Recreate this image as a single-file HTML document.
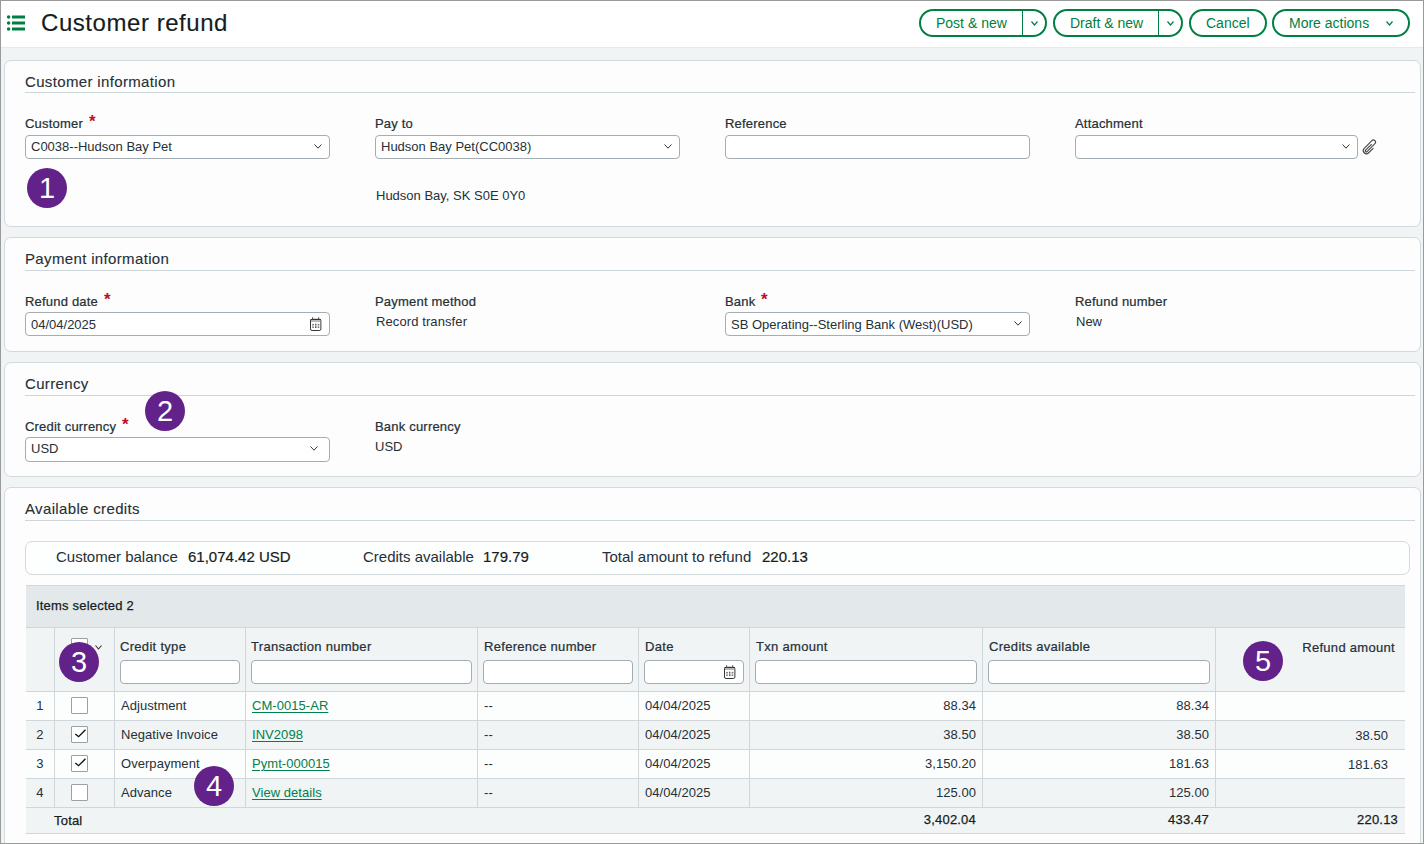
<!DOCTYPE html>
<html><head><meta charset="utf-8"><style>
*{box-sizing:border-box;margin:0;padding:0}
html,body{width:1424px;height:844px;overflow:hidden}
body{position:relative;background:#f1f4f5;font-family:"Liberation Sans",sans-serif;color:#253037}
.abs{position:absolute}
#frame{position:absolute;left:0;top:0;width:1424px;height:844px;border:1px solid #9a9a9a;border-right-width:1px;border-bottom-width:1px;z-index:50;pointer-events:none}
#hdr{position:absolute;left:0;top:0;width:1424px;height:48px;background:#fff;border-bottom:1px solid #e4e9eb}
.title{position:absolute;left:41px;top:9px;font-size:24px;line-height:28px;color:#161c20;letter-spacing:0.55px;-webkit-text-stroke:0.15px #161c20}
.btn{position:absolute;top:9px;height:28px;border:2px solid #007f43;border-radius:14px;color:#007f43;font-size:14px;line-height:24px;background:#fff;white-space:nowrap;letter-spacing:0}
.btn .dv{position:absolute;top:0;bottom:0;width:1px;background:#007f43}
.card{position:absolute;left:4px;width:1417px;background:#fdfdfd;border:1px solid #d2dadd;border-radius:7px}
.stitle{position:absolute;left:20px;font-size:15px;line-height:18px;color:#253037;letter-spacing:0.35px;-webkit-text-stroke:0.12px #253037}
.sline{position:absolute;left:20px;right:5px;height:1px;background:#cdd6da}
.lbl{position:absolute;font-size:13px;line-height:16px;color:#253037;letter-spacing:0.2px;-webkit-text-stroke:0.22px #253037;white-space:nowrap}
.req{position:absolute;color:#c00d2a;font-size:17px;font-weight:bold;-webkit-text-stroke:0;top:-2px}
.inp{position:absolute;height:24px;background:#fff;border:1px solid #a3adb3;border-radius:4px;font-size:13px;line-height:23px;padding-left:5px;color:#253037;white-space:nowrap;letter-spacing:0}
.val{position:absolute;font-size:13px;line-height:16px;color:#253037;letter-spacing:0;white-space:nowrap}
.circ{position:absolute;width:40px;height:40px;border-radius:50%;background:#632289;color:#fff;font-size:29px;line-height:40px;text-align:center;z-index:10}
.sum{position:absolute;top:548px;font-size:15px;line-height:18px;color:#253037;letter-spacing:0}
.sumb{position:absolute;top:548px;font-size:15px;line-height:18px;color:#161c20;-webkit-text-stroke:0.2px #161c20;letter-spacing:0}
.gt{position:absolute;font-size:13px;line-height:16px;color:#161c20;-webkit-text-stroke:0.25px #161c20;letter-spacing:0.2px;white-space:nowrap}
.gh{position:absolute;font-size:13px;line-height:16px;color:#253037;-webkit-text-stroke:0.22px #253037;letter-spacing:0.3px;white-space:nowrap}
.gc{position:absolute;font-size:13px;line-height:16px;color:#253037;white-space:nowrap;letter-spacing:0.05px}
.lnk{color:#00804a;text-decoration:underline;text-underline-offset:2px}
.fin{position:absolute;top:660px;height:24px;background:#fff;border:1px solid #a3adb3;border-radius:4px}
.cb{position:absolute;width:17px;height:17px;border:1px solid #97a2a8;background:#fff;border-radius:1px}
</style></head><body>
<div id="hdr">
<svg class="abs" style="left:6px;top:14px" width="20" height="18" viewBox="0 0 20 18"><g fill="#007f43"><circle cx="2.6" cy="3" r="1.75"/><circle cx="2.6" cy="9" r="1.75"/><circle cx="2.6" cy="15" r="1.75"/><rect x="6" y="1.5" width="13" height="3"/><rect x="6" y="7.5" width="13" height="3"/><rect x="6" y="13.5" width="13" height="3"/></g></svg>
<div class="title">Customer refund</div>
<div class="btn" style="left:919px;width:128px"><span class="abs" style="left:15px;top:0">Post &amp; new</span><div class="dv" style="left:101px"></div><svg class="abs" style="left:110px;top:10px;overflow:visible" width="7" height="4" viewBox="0 0 7 4"><path d="M0.5 0.5 L3.5 4 L6.5 0.5" fill="none" stroke="#007f43" stroke-width="1.2"/></svg></div>
<div class="btn" style="left:1053px;width:130px"><span class="abs" style="left:15px;top:0">Draft &amp; new</span><div class="dv" style="left:103px"></div><svg class="abs" style="left:112px;top:10px;overflow:visible" width="7" height="4" viewBox="0 0 7 4"><path d="M0.5 0.5 L3.5 4 L6.5 0.5" fill="none" stroke="#007f43" stroke-width="1.2"/></svg></div>
<div class="btn" style="left:1189px;width:78px"><span class="abs" style="left:15px;top:0">Cancel</span></div>
<div class="btn" style="left:1272px;width:138px"><span class="abs" style="left:15px;top:0">More actions</span><svg class="abs" style="left:112px;top:10px;overflow:visible" width="7" height="4" viewBox="0 0 7 4"><path d="M0.5 0.5 L3.5 4 L6.5 0.5" fill="none" stroke="#007f43" stroke-width="1.2"/></svg></div>
</div>
<div class="card" style="top:60px;height:167px"><div class="stitle" style="top:12px">Customer information</div><div class="sline" style="top:31px"></div></div>
<div class="lbl" style="left:25px;top:116px">Customer<span class="req" style="left:64px">*</span></div>
<div class="inp" style="left:25px;top:135px;width:305px;height:24px;line-height:22px">C0038--Hudson Bay Pet<svg class="abs" style="left:288px;top:8px;overflow:visible" width="8" height="4.2" viewBox="0 0 8 4.2"><path d="M0.5 0.5 L4.0 4.2 L7.5 0.5" fill="none" stroke="#333" stroke-width="1.0"/></svg></div>
<div class="lbl" style="left:375px;top:116px">Pay to</div>
<div class="inp" style="left:375px;top:135px;width:305px;height:24px;line-height:22px">Hudson Bay Pet(CC0038)<svg class="abs" style="left:288px;top:8px;overflow:visible" width="8" height="4.2" viewBox="0 0 8 4.2"><path d="M0.5 0.5 L4.0 4.2 L7.5 0.5" fill="none" stroke="#333" stroke-width="1.0"/></svg></div>
<div class="val" style="left:376px;top:188px">Hudson Bay, SK S0E 0Y0</div>
<div class="lbl" style="left:725px;top:116px">Reference</div>
<div class="inp" style="left:725px;top:135px;width:305px;height:24px;line-height:23px"></div>
<div class="lbl" style="left:1075px;top:116px">Attachment</div>
<div class="inp" style="left:1075px;top:135px;width:283px;height:24px;line-height:23px"><svg class="abs" style="left:266px;top:8px;overflow:visible" width="8" height="4.2" viewBox="0 0 8 4.2"><path d="M0.5 0.5 L4.0 4.2 L7.5 0.5" fill="none" stroke="#333" stroke-width="1.0"/></svg></div>
<svg class="abs" style="left:1360px;top:137px" width="20" height="20" viewBox="0 0 20 20"><g transform="translate(10 10) rotate(45) translate(-3.15 -9.2)"><path d="M2.3 6 V14.6 A1 1 0 0 0 4.3 14.6 V3.4 A2.15 2.15 0 0 0 0 3.4 V14.2 A3.15 3.15 0 0 0 6.3 14.2 V7.5" fill="none" stroke="#444" stroke-width="1.1"/></g></svg>
<div class="circ" style="left:27px;top:168px">1</div>
<div class="card" style="top:237px;height:115px"><div class="stitle" style="top:12px">Payment information</div><div class="sline" style="top:32px"></div></div>
<div class="lbl" style="left:25px;top:294px">Refund date<span class="req" style="left:79px">*</span></div>
<div class="inp" style="left:25px;top:312px;width:305px;height:24px;line-height:23px">04/04/2025<svg class="abs" style="left:284px;top:4px" width="12" height="14" viewBox="0 0 12 14"><rect x="0.5" y="2.3" width="10.4" height="11.2" rx="1.6" fill="none" stroke="#333" stroke-width="1"/><rect x="0.5" y="2" width="10.4" height="1.3" fill="#333"/><rect x="1" y="3.3" width="9.4" height="1.7" fill="#b5b5b5"/><rect x="2.1" y="0.2" width="1" height="2.2" fill="#555"/><rect x="8.2" y="0.2" width="1" height="2.2" fill="#555"/><g fill="#777"><rect x="2.2" y="6.9" width="1.7" height="1.6"/><rect x="7.6" y="6.9" width="1.7" height="1.6"/></g><g fill="#333"><rect x="5.2" y="6.7" width="1.1" height="1.9"/><rect x="2.2" y="9.6" width="1.7" height="1"/><rect x="7.6" y="9.6" width="1.7" height="1"/><rect x="5" y="9.4" width="1.5" height="1.4"/></g></svg></div>
<div class="lbl" style="left:375px;top:294px">Payment method</div>
<div class="val" style="left:376px;top:314px;letter-spacing:0.1px">Record transfer</div>
<div class="lbl" style="left:725px;top:294px">Bank<span class="req" style="left:36px">*</span></div>
<div class="inp" style="left:725px;top:312px;width:305px;height:24px;line-height:23px">SB Operating--Sterling Bank (West)(USD)<svg class="abs" style="left:288px;top:8px;overflow:visible" width="8" height="4.2" viewBox="0 0 8 4.2"><path d="M0.5 0.5 L4.0 4.2 L7.5 0.5" fill="none" stroke="#333" stroke-width="1.0"/></svg></div>
<div class="lbl" style="left:1075px;top:294px">Refund number</div>
<div class="val" style="left:1076px;top:314px">New</div>
<div class="card" style="top:362px;height:115px"><div class="stitle" style="top:12px">Currency</div><div class="sline" style="top:32px"></div></div>
<div class="lbl" style="left:25px;top:419px">Credit currency<span class="req" style="left:97px">*</span></div>
<div class="inp" style="left:25px;top:437px;width:305px;height:25px;line-height:22px">USD<svg class="abs" style="left:284px;top:8px;overflow:visible" width="8" height="4.2" viewBox="0 0 8 4.2"><path d="M0.5 0.5 L4.0 4.2 L7.5 0.5" fill="none" stroke="#333" stroke-width="1.0"/></svg></div>
<div class="lbl" style="left:375px;top:419px">Bank currency</div>
<div class="val" style="left:375px;top:439px">USD</div>
<div class="circ" style="left:145px;top:391px">2</div>
<div class="card" style="top:487px;height:400px"><div class="stitle" style="top:12px">Available credits</div><div class="sline" style="top:32px"></div></div>
<div class="abs" style="left:25px;top:541px;width:1385px;height:34px;background:#fdfefe;border:1px solid #d2dadd;border-radius:7px"></div>
<div class="sum" style="left:56px">Customer balance</div><div class="sumb" style="left:188px">61,074.42 USD</div>
<div class="sum" style="left:363px">Credits available</div><div class="sumb" style="left:483px">179.79</div>
<div class="sum" style="left:602px">Total amount to refund</div><div class="sumb" style="left:762px">220.13</div>
<div class="abs" style="left:26px;top:585px;width:1379px;height:43px;background:#e3e9eb;border-top:1px solid #cfd7db;border-bottom:1px solid #cfd7db"></div>
<div class="gt" style="left:36px;top:598px">Items selected 2</div>
<div class="abs" style="left:26px;top:628px;width:1379px;height:64px;background:#f1f4f5;border-bottom:1px solid #cfd7db"></div>
<div class="abs" style="left:26px;top:692px;width:1379px;height:29px;background:#fcfdfd"></div>
<div class="abs" style="left:26px;top:721px;width:1379px;height:29px;background:#f1f4f5"></div>
<div class="abs" style="left:26px;top:750px;width:1379px;height:29px;background:#fcfdfd"></div>
<div class="abs" style="left:26px;top:779px;width:1379px;height:29px;background:#f1f4f5"></div>
<div class="abs" style="left:26px;top:808px;width:1379px;height:26px;background:#f1f4f5;border-bottom:1px solid #cfd7db"></div>
<div class="abs" style="left:26px;top:720px;width:1379px;height:1px;background:#cfd7db"></div>
<div class="abs" style="left:26px;top:749px;width:1379px;height:1px;background:#cfd7db"></div>
<div class="abs" style="left:26px;top:778px;width:1379px;height:1px;background:#cfd7db"></div>
<div class="abs" style="left:26px;top:807px;width:1379px;height:1px;background:#cfd7db"></div>
<div class="abs" style="left:54px;top:628px;width:1px;height:179px;background:#cfd7db"></div>
<div class="abs" style="left:114px;top:628px;width:1px;height:179px;background:#cfd7db"></div>
<div class="abs" style="left:245px;top:628px;width:1px;height:179px;background:#cfd7db"></div>
<div class="abs" style="left:477px;top:628px;width:1px;height:179px;background:#cfd7db"></div>
<div class="abs" style="left:638px;top:628px;width:1px;height:179px;background:#cfd7db"></div>
<div class="abs" style="left:749px;top:628px;width:1px;height:179px;background:#cfd7db"></div>
<div class="abs" style="left:982px;top:628px;width:1px;height:179px;background:#cfd7db"></div>
<div class="abs" style="left:1215px;top:628px;width:1px;height:179px;background:#cfd7db"></div>
<div class="gh" style="left:120px;top:639px">Credit type</div>
<div class="gh" style="left:251px;top:639px">Transaction number</div>
<div class="gh" style="left:484px;top:639px">Reference number</div>
<div class="gh" style="left:645px;top:639px">Date</div>
<div class="gh" style="left:756px;top:639px">Txn amount</div>
<div class="gh" style="left:989px;top:639px">Credits available</div>
<div class="gh" style="left:1215px;width:180px;text-align:right;top:640px">Refund amount</div>
<div class="fin" style="left:120px;width:120px"></div>
<div class="fin" style="left:251px;width:221px"></div>
<div class="fin" style="left:483px;width:150px"></div>
<div class="fin" style="left:644px;width:100px"></div>
<div class="fin" style="left:755px;width:222px"></div>
<div class="fin" style="left:988px;width:222px"></div>
<svg class="abs" style="left:724px;top:665px" width="12" height="14" viewBox="0 0 12 14"><rect x="0.5" y="2.3" width="10.4" height="11.2" rx="1.6" fill="none" stroke="#333" stroke-width="1"/><rect x="0.5" y="2" width="10.4" height="1.3" fill="#333"/><rect x="1" y="3.3" width="9.4" height="1.7" fill="#b5b5b5"/><rect x="2.1" y="0.2" width="1" height="2.2" fill="#555"/><rect x="8.2" y="0.2" width="1" height="2.2" fill="#555"/><g fill="#777"><rect x="2.2" y="6.9" width="1.7" height="1.6"/><rect x="7.6" y="6.9" width="1.7" height="1.6"/></g><g fill="#333"><rect x="5.2" y="6.7" width="1.1" height="1.9"/><rect x="2.2" y="9.6" width="1.7" height="1"/><rect x="7.6" y="9.6" width="1.7" height="1"/><rect x="5" y="9.4" width="1.5" height="1.4"/></g></svg>
<div class="cb" style="left:71px;top:638px"></div><svg class="abs" style="left:95px;top:645px;overflow:visible" width="7" height="4" viewBox="0 0 7 4"><path d="M0.5 0.5 L3.5 4 L6.5 0.5" fill="none" stroke="#333" stroke-width="1.1"/></svg>
<div class="gc" style="left:26px;width:28px;text-align:center;top:698px">1</div>
<div class="cb" style="left:71px;top:697px"></div>
<div class="gc" style="left:121px;top:698px">Adjustment</div>
<div class="gc lnk" style="left:252px;top:698px">CM-0015-AR</div>
<div class="gc" style="left:484px;top:698px">--</div>
<div class="gc" style="left:645px;top:698px">04/04/2025</div>
<div class="gc" style="left:749px;width:227px;text-align:right;top:698px">88.34</div>
<div class="gc" style="left:982px;width:227px;text-align:right;top:698px">88.34</div>
<div class="gc" style="left:26px;width:28px;text-align:center;top:727px">2</div>
<div class="cb" style="left:71px;top:726px"><svg width="15" height="15" viewBox="0 0 15 15" style="position:absolute;left:0;top:0"><path d="M3.3 6.9 L6.6 9.7 L13.5 2.7" fill="none" stroke="#111" stroke-width="1.35"/></svg></div>
<div class="gc" style="left:121px;top:727px">Negative Invoice</div>
<div class="gc lnk" style="left:252px;top:727px">INV2098</div>
<div class="gc" style="left:484px;top:727px">--</div>
<div class="gc" style="left:645px;top:727px">04/04/2025</div>
<div class="gc" style="left:749px;width:227px;text-align:right;top:727px">38.50</div>
<div class="gc" style="left:982px;width:227px;text-align:right;top:727px">38.50</div>
<div class="gc" style="left:1215px;width:173px;text-align:right;top:728px">38.50</div>
<div class="gc" style="left:26px;width:28px;text-align:center;top:756px">3</div>
<div class="cb" style="left:71px;top:755px"><svg width="15" height="15" viewBox="0 0 15 15" style="position:absolute;left:0;top:0"><path d="M3.3 6.9 L6.6 9.7 L13.5 2.7" fill="none" stroke="#111" stroke-width="1.35"/></svg></div>
<div class="gc" style="left:121px;top:756px">Overpayment</div>
<div class="gc lnk" style="left:252px;top:756px">Pymt-000015</div>
<div class="gc" style="left:484px;top:756px">--</div>
<div class="gc" style="left:645px;top:756px">04/04/2025</div>
<div class="gc" style="left:749px;width:227px;text-align:right;top:756px">3,150.20</div>
<div class="gc" style="left:982px;width:227px;text-align:right;top:756px">181.63</div>
<div class="gc" style="left:1215px;width:173px;text-align:right;top:757px">181.63</div>
<div class="gc" style="left:26px;width:28px;text-align:center;top:785px">4</div>
<div class="cb" style="left:71px;top:784px"></div>
<div class="gc" style="left:121px;top:785px">Advance</div>
<div class="gc lnk" style="left:252px;top:785px">View details</div>
<div class="gc" style="left:484px;top:785px">--</div>
<div class="gc" style="left:645px;top:785px">04/04/2025</div>
<div class="gc" style="left:749px;width:227px;text-align:right;top:785px">125.00</div>
<div class="gc" style="left:982px;width:227px;text-align:right;top:785px">125.00</div>
<div class="gt" style="left:54px;top:813px">Total</div>
<div class="gt" style="left:749px;width:227px;text-align:right;top:812px">3,402.04</div>
<div class="gt" style="left:982px;width:227px;text-align:right;top:812px">433.47</div>
<div class="gt" style="left:1215px;width:183px;text-align:right;top:812px">220.13</div>
<div class="circ" style="left:59px;top:642px">3</div>
<div class="circ" style="left:194px;top:766px">4</div>
<div class="circ" style="left:1243px;top:641px">5</div>
<div id="frame"></div>
</body></html>
